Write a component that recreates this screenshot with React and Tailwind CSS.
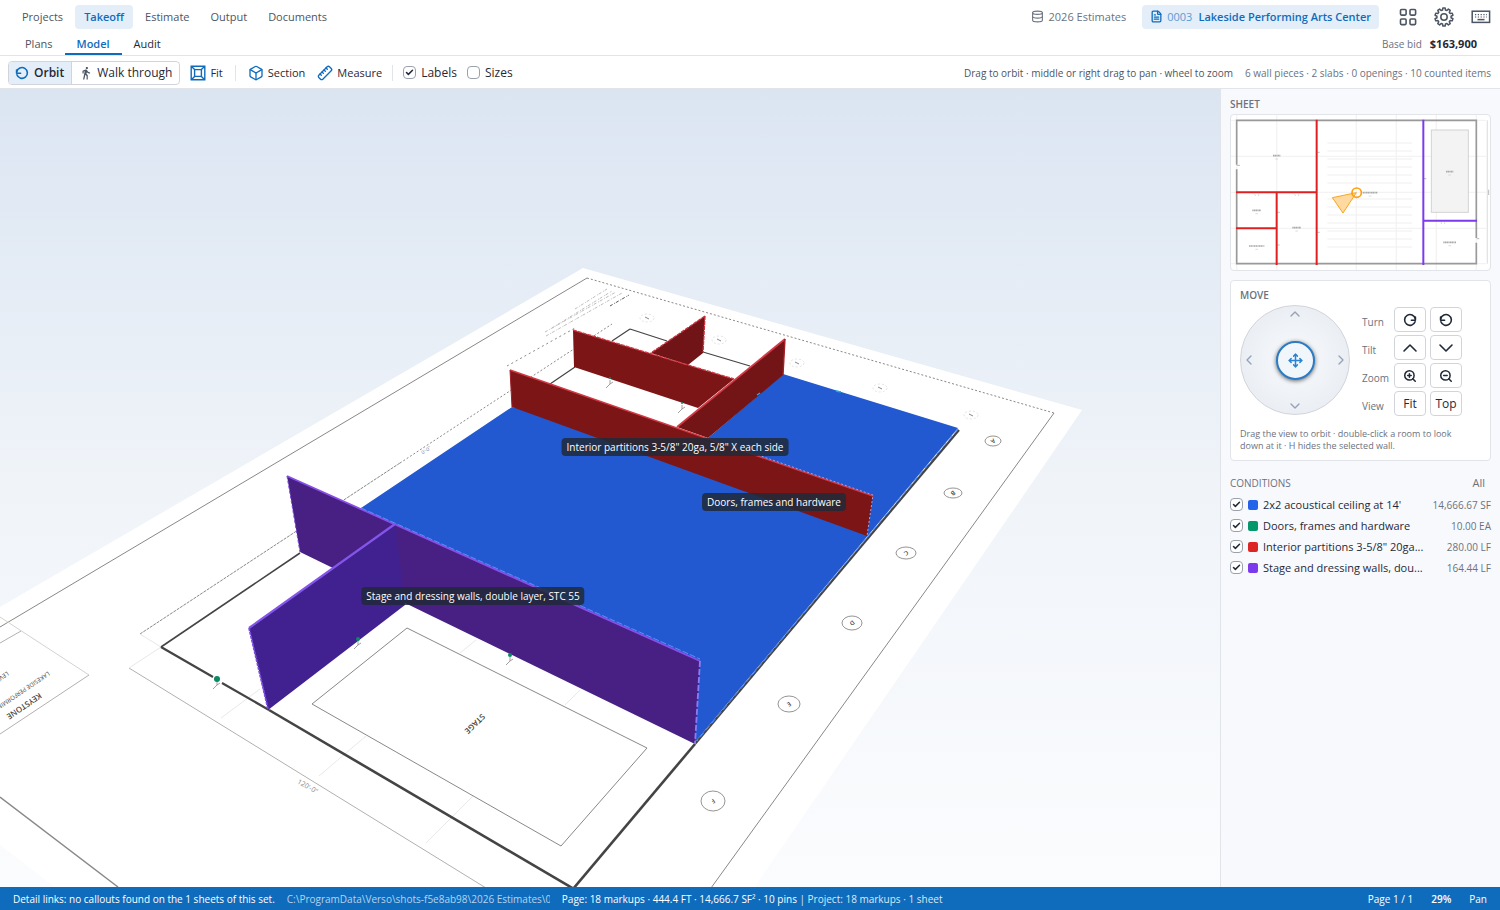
import React from 'react';
import { Box, Check, ChevronDown, ChevronLeft, ChevronRight, ChevronUp, Database, FileText, Move, Ruler, ZoomIn, ZoomOut } from 'lucide-react';
import { MdDirectionsWalk } from 'react-icons/md';

const CONDITIONS = [
  { name: "2x2 acoustical ceiling at 14'", qty: '14,666.67 SF', color: 'bg-[#2563eb]' },
  { name: 'Doors, frames and hardware', qty: '10.00 EA', color: 'bg-[#059669]' },
  { name: 'Interior partitions 3-5/8" 20ga...', qty: '280.00 LF', color: 'bg-[#dc2626]' },
  { name: 'Stage and dressing walls, dou...', qty: '164.44 LF', color: 'bg-[#7c3aed]' },
];

const BUBBLES = [
  { x: 713, y: 801, rx: 12, ry: 10, t: 'F' },
  { x: 789, y: 704, rx: 11, ry: 8, t: 'E' },
  { x: 852, y: 623, rx: 10, ry: 7, t: 'D' },
  { x: 906, y: 553, rx: 10, ry: 6, t: 'C' },
  { x: 953, y: 493, rx: 9, ry: 5, t: 'B' },
  { x: 993, y: 441, rx: 8, ry: 5, t: 'A' },
];

const FAINT_BUBBLES = [
  { x: 971, y: 415 },
  { x: 880, y: 388 },
  { x: 797, y: 363 },
  { x: 719, y: 340 },
  { x: 647, y: 318 },
];

const DOORS = [
  { x: 217, y: 679, r: 3 },
  { x: 358, y: 639, r: 2 },
  { x: 510, y: 655, r: 2 },
  { x: 610, y: 378, r: 1 },
  { x: 682, y: 403, r: 1 },
];

function gearPath() {
  const teeth = 10;
  let d = '';
  for (let i = 0; i < teeth; i++) {
    const step = (Math.PI * 2) / teeth;
    const a = i * step - Math.PI / 2;
    [[-0.33, 7.1], [-0.2, 9.1], [0.2, 9.1], [0.33, 7.1]].forEach(([o, r], k) => {
      const x = 10 + Math.cos(a + o * step) * r;
      const y = 10 + Math.sin(a + o * step) * r;
      d += `${i === 0 && k === 0 ? 'M' : 'L'}${x.toFixed(2)} ${y.toFixed(2)}`;
    });
  }
  return d + 'Z';
}

function RotateIcon({ flip = false, className }) {
  return (
    <svg viewBox="0 0 16 16" fill="none" stroke="currentColor" strokeWidth="1.6" strokeLinecap="round" strokeLinejoin="round" className={className} aria-hidden="true">
      <g transform={flip ? 'matrix(-1 0 0 1 16 0)' : undefined}>
        <path d="M13.4 5v3.2H9.4" />
        <path d="M13.1 9.8A5.4 5.4 0 1 1 13.3 6.8" />
      </g>
    </svg>
  );
}

function FitIcon() {
  return (
    <svg viewBox="0 0 16 16" fill="none" stroke="currentColor" strokeWidth="1.4" className="size-4" aria-hidden="true">
      <path d="M1.2 1.2h13.6v13.6H1.2zM4.6 4.6h6.8v6.8H4.6zM1 1l3.6 3.6M15 1l-3.6 3.6M1 15l3.6-3.6M15 15l-3.6-3.6" />
    </svg>
  );
}

function Tick({ label, defaultChecked }) {
  return (
    <span className="relative grid size-[13px] shrink-0 place-items-center">
      <input type="checkbox" aria-label={label} defaultChecked={defaultChecked} className="peer col-start-1 row-start-1 size-[13px] appearance-none rounded-sm border border-[#9aa1ab] bg-white" />
      <Check className="pointer-events-none invisible col-start-1 row-start-1 size-[9px] text-[#1f2937] peer-checked:visible" strokeWidth={4} />
    </span>
  );
}

function TopBar() {
  const tabs = ['Projects', 'Takeoff', 'Estimate', 'Output', 'Documents'];
  return (
    <div className="flex h-8 items-center pt-px pr-[9px] pl-[13px]">
      <nav className="flex gap-[3px]" aria-label="Main">
        {tabs.map((t) => (
          <button key={t} type="button" className={t === 'Takeoff' ? 'h-6 rounded bg-[#e3eef8] px-[9px] font-semibold text-[#0f6cbd]' : 'h-6 rounded px-[9px] text-[#4b5563]'}>
            {t}
          </button>
        ))}
      </nav>
      <div className="ml-auto flex items-center text-[#6b7280]">
        <button type="button" className="flex items-center gap-[5px]">
          <Database className="size-[13px]" />
          2026 Estimates
        </button>
        <button type="button" className="ml-4 flex h-6 items-center rounded bg-[#e3eef8] px-2 text-[#0f6cbd]">
          <FileText className="size-[13px]" strokeWidth={2.4} />
          <span className="ml-1 text-[#5b9bd5]">0003</span>
          <span className="ml-1.5 font-semibold">Lakeside Performing Arts Center</span>
        </button>
        <button type="button" aria-label="Apps" className="ml-5 text-[#4b5563]">
          <svg viewBox="0 0 18 18" fill="none" stroke="currentColor" strokeWidth="1.6" className="size-[18px]">
            <rect x="1.5" y="1.5" width="5.6" height="5.6" rx="1" />
            <rect x="11" y="1.5" width="5.6" height="5.6" rx="1" />
            <rect x="1.5" y="11" width="5.6" height="5.6" rx="1" />
            <rect x="11" y="11" width="5.6" height="5.6" rx="1" />
          </svg>
        </button>
        <button type="button" aria-label="Settings" className="ml-[17px] text-[#4b5563]">
          <svg viewBox="0 0 20 20" fill="none" stroke="currentColor" strokeWidth="1.5" strokeLinejoin="round" className="size-5">
            <path d={gearPath()} />
            <circle cx="10" cy="10" r="3.2" />
          </svg>
        </button>
        <button type="button" aria-label="Keyboard shortcuts" className="ml-[17px] text-[#4b5563]">
          <svg viewBox="0 0 20 14" fill="none" stroke="currentColor" strokeWidth="1.5" className="h-3.5 w-5">
            <rect x="1.2" y="1.2" width="17.4" height="11.2" />
            <path d="M4 4.6h12M4 7h12" strokeDasharray="1.2 1.6" strokeWidth="1.2" />
            <path d="M6.5 9.6h7" />
          </svg>
        </button>
      </div>
    </div>
  );
}

function SubBar() {
  return (
    <div className="flex h-6 items-stretch border-b border-[#e1e4e9] pr-[23px] pl-[13px]">
      <nav className="flex" aria-label="Takeoff views">
        <button type="button" className="px-3 text-[#4b5563]">Plans</button>
        <button type="button" className="border-b-2 border-[#0f6cbd] px-3 pt-0.5 font-semibold text-[#0f6cbd]">Model</button>
        <button type="button" className="px-3 text-[#1f2937]">Audit</button>
      </nav>
      <div className="ml-auto flex items-center gap-2">
        <span className="text-[10px] text-[#6b7280]">Base bid</span>
        <span className="font-bold text-[#1f2937]">$163,900</span>
      </div>
    </div>
  );
}

function Toolbar() {
  return (
    <div className="flex h-[33px] items-center border-b border-[#e1e4e9] pt-px pr-[9px] pl-2 text-[12px] text-[#1f2937]">
      <div className="flex h-6 overflow-hidden rounded-sm border border-[#d1d5db]">
        <button type="button" className="flex items-center gap-1 border-r border-[#d1d5db] bg-[#e3eef8] pr-[7px] pl-[5px] font-semibold">
          <RotateIcon flip className="size-4 text-[#0f6cbd]" />
          Orbit
        </button>
        <button type="button" className="flex items-center gap-1 px-[7px]">
          <MdDirectionsWalk className="size-3.5 text-[#4b5563]" />
          Walk through
        </button>
      </div>
      <div className="ml-2.5 flex items-center text-[11px]">
        <button type="button" className="flex items-center gap-1">
          <span className="text-[#0f6cbd]"><FitIcon /></span>
          Fit
        </button>
        <span className="mx-3 h-4 w-px bg-[#e1e4e9]" />
        <button type="button" className="flex items-center gap-1">
          <Box className="size-4 text-[#0f6cbd]" />
          Section
        </button>
        <button type="button" className="ml-3 flex items-center gap-1">
          <Ruler className="size-4 -scale-x-100 text-[#0f6cbd]" />
          Measure
        </button>
        <span className="mx-2.5 h-4 w-px bg-[#e1e4e9]" />
      </div>
      <label className="flex items-center gap-[5px]"><Tick defaultChecked />Labels</label>
      <label className="ml-2.5 flex items-center gap-[5px]"><Tick />Sizes</label>
      <div className="ml-auto flex gap-3 text-[10px]">
        <span className="text-[#4b5563]">Drag to orbit · middle or right drag to pan · wheel to zoom</span>
        <span className="text-[#6b7280]">6 wall pieces · 2 slabs · 0 openings · 10 counted items</span>
      </div>
    </div>
  );
}

function Scene() {
  return (
    <svg viewBox="0 89 1220 798" preserveAspectRatio="xMidYMid slice" className="absolute inset-0 size-full" role="img" aria-label="3D model view" fontFamily="'Open Sans', sans-serif">
      <defs>
        <linearGradient id="sky" x1="0" y1="0" x2="0" y2="1">
          <stop offset="0" stopColor="#dbe5f2" />
          <stop offset="0.5" stopColor="#f0f4f9" />
          <stop offset="1" stopColor="#fbfcfe" />
        </linearGradient>
      </defs>
      <rect x="0" y="89" width="1220" height="798" fill="url(#sky)" />
      <polygon points="583,268 1082,410 754,888 56,888 0,845 0,607" fill="#fff" />

      <g fill="none" stroke="#8a8886" strokeWidth="1">
        <path d="M587 278L0 627M1054 413L711 888" />
        <path d="M587 278L1054 413" strokeDasharray="2 2" />
        <path d="M0 797L118 887" strokeWidth="1.4" />
        <path d="M140 634L400 463" strokeDasharray="3 1" />
        <path d="M400 463L612 324" strokeDasharray="2 2" />
        <path d="M507 366L575 328" strokeDasharray="2 3" />
        <path d="M129 668L486 888" stroke="#b3b0ad" />
        <path d="M0 617L89 675" stroke="#d6d2cd" />
        <path d="M89 675L0 734M0 643L21 631" stroke="#b3b0ad" />
        <path d="M407 628L647 748L561 846L312 704Z" />
      </g>
      <g stroke="#e8e8e8" strokeWidth="1">
        <path d="M140 634L161 647M129 668L161 647M221 718L260 689M319 776L366 736M426 843L473 796M460 653L476 640M565 705L580 690" />
      </g>
      <g stroke="#a3a3a3" strokeWidth="1" strokeDasharray="3 2 1 1">
        <path d="M575 309L607 289M552 328L612 291M545 332L616 292M546 336L622 293" opacity="0.7" />
        <path d="M610 306L629 295" stroke="#555" />
      </g>

      <g stroke="#444" fill="none">
        <path d="M630 329L667 341M703 352L750 366M630 329L612 341M575 367L550 384" strokeWidth="1.2" />
        <path d="M300 553L161 647" strokeWidth="1.6" />
        <path d="M161 647L213 677M222 683L269 710" strokeWidth="2.2" />
        <path d="M269 710L574 889" strokeWidth="2.6" />
        <path d="M959 430L695 744" strokeWidth="2.2" />
        <path d="M695 744L573 889" strokeWidth="2.6" />
      </g>

      <polygon points="512,407 600,425 708,438 783,374 958,428 696,741 380,560 361,508" fill="#2259d1" />
      <path d="M958 429L697 741" stroke="#4a86f0" strokeWidth="1" strokeDasharray="6 3" />

      <polygon points="705,316 703,353 688,365 651,353" fill="#701417" />
      <path d="M705 316L651 353M705 316L703 352" stroke="#c8303c" strokeWidth="1.4" strokeDasharray="4 1" />
      <polygon points="573,330 734,379 698,408 574,367" fill="#7c1616" />
      <path d="M573 330L734 379" stroke="#d33a46" strokeWidth="1.4" strokeDasharray="4 1" />
      <polygon points="785,339 783,375 708,438 677,427" fill="#731517" />
      <path d="M785 339L677 427" stroke="#d33a46" strokeWidth="1.8" />
      <path d="M785 339L783 375" stroke="#a02028" strokeWidth="1.4" />
      <polygon points="510,370 873,496 867,536 512,407" fill="#7c1616" />
      <path d="M510 370L873 496" stroke="#d33a46" strokeWidth="1.4" />
      <path d="M758 455L873 495L867 536" fill="none" stroke="#a9a0dd" strokeWidth="1" strokeDasharray="2 2" />
      <path d="M510 370L512 407" stroke="#a02028" strokeWidth="1" />

      <polygon points="287,476 700,661 695,744 300,552" fill="#482083" />
      <path d="M287 476L700 661" stroke="#8a4ee8" strokeWidth="1.8" />
      <path d="M361 508L700 659" stroke="#5f8ef5" strokeWidth="1" strokeDasharray="6 2" />
      <path d="M287 476L300 552" stroke="#7a45d8" strokeWidth="1" strokeDasharray="3 2" />
      <path d="M700 661L695 744" stroke="#8b7cf5" strokeWidth="1.8" strokeDasharray="6 2" />
      <polygon points="395,524 249,628 268,710 405,605" fill="#41208f" />
      <path d="M395 524L249 628" stroke="#8455ea" strokeWidth="2.2" />
      <path d="M249 628L268 709" stroke="#7a4be0" strokeWidth="1.8" strokeDasharray="3 1" />

      {DOORS.map((d) => (
        <g key={d.x}>
          <path d={`M${d.x} ${d.y + 2}l0 4l-4 4M${d.x} ${d.y + 6}l3 -2`} fill="none" stroke="#8a8886" strokeWidth="0.8" />
          <circle cx={d.x} cy={d.y} r={d.r} fill="#0a8a62" />
        </g>
      ))}
      <path d="M757 395l3 -2M836 391l5 1" stroke="#1bb0d8" strokeWidth="1.4" />

      {BUBBLES.map((b) => (
        <g key={b.t}>
          <ellipse cx={b.x} cy={b.y} rx={b.rx} ry={b.ry} fill="#fff" stroke="#8a8886" strokeWidth="0.9" />
          <text fontSize="6" fontWeight="600" fill="#444" textAnchor="middle" transform={`translate(${b.x} ${b.y}) rotate(140)`} dy="2">{b.t}</text>
        </g>
      ))}
      {FAINT_BUBBLES.map((b) => (
        <g key={b.x}>
          <ellipse cx={b.x} cy={b.y} rx="7" ry="4" fill="none" stroke="#dcdcdc" strokeWidth="0.8" strokeDasharray="2 2" />
          <path d={`M${b.x - 2} ${b.y - 1}l4 2`} stroke="#888" strokeWidth="1" />
        </g>
      ))}

      <g fill="#444" textAnchor="middle">
        <text fontSize="8" fontWeight="600" transform="translate(475 724) rotate(136)" dy="3">STAGE</text>
        <text fontSize="7" fill="#8a8886" transform="translate(308 786) rotate(30)" dy="3">120'-0"</text>
        <text fontSize="5" fill="#8a8886" transform="translate(426 450) rotate(-34)" dy="2">0'-0"</text>
      </g>
      <g fill="#444">
        <text fontSize="8" fontWeight="600" transform="translate(41 695) rotate(146)" dy="3">KEYSTONE</text>
        <text fontSize="6" transform="translate(49 673) rotate(146)" dy="2">LAKESIDE PERFORMING</text>
        <text fontSize="6" transform="translate(8 673) rotate(146)" dy="2">LEVEL</text>
      </g>
    </svg>
  );
}

function Callout({ className, children }) {
  return (
    <div className={`absolute -translate-x-1/2 -translate-y-1/2 rounded bg-[#202938]/85 px-[5px] text-[10px] leading-[18px] whitespace-nowrap text-white ${className}`}>
      {children}
    </div>
  );
}

function SheetMap() {
  const seats = [165, 189, 213, 237, 261, 285, 333, 357, 381, 405, 429, 453, 477];
  const rooms = [
    [170, 203, 22], [110, 367, 26], [230, 419, 26], [110, 474, 46], [450, 314, 44], [689, 251, 22], [689, 463, 38],
  ];
  return (
    <svg viewBox="33 81 777 465" className="block w-full rounded-sm border border-[#e1e4e9] bg-white" role="img" aria-label="Sheet overview">
      <g stroke="#f3f3f3" strokeWidth="4">
        <path d="M50 81V546M170 81V546M409 81V546M529 81V546M649 81V546M769 81V546M33 97H798M33 205H798M33 313H798M33 421H798M33 527H798" />
      </g>
      <g stroke="#efefef" strokeWidth="3">
        {seats.map((y) => <path key={y} d={`M322 ${y}H577`} />)}
        <path d="M802 97V527" stroke="#e4e4e4" strokeWidth="4" />
      </g>
      <rect x="634" y="126" width="111" height="247" fill="#f3f3f3" stroke="#d2d2d2" strokeWidth="3" />
      <path d="M50 230V97H769V450M769 464V527H50V244" fill="none" stroke="#999" strokeWidth="5" />
      <g stroke="#bbb" strokeWidth="3">
        <path d="M50 232h10M292 193h7M292 433h7M172 373h7M172 471h7M612 272h7M770 452h8M806 305v16" />
        <path d="M103 318l4 6M117 318l-2 6M223 318l4 6M237 318l-2 6M664 402v6M674 402v6" stroke="#ddd" />
      </g>
      {rooms.map(([x, y, w]) => (
        <g key={`${x}-${y}`}>
          <path d={`M${x - w / 2} ${y}h${w}`} stroke="#aaa" strokeWidth="5" strokeDasharray="4 1" />
          <path d={`M${x - 4} ${y + 10}h8`} stroke="#ccc" strokeWidth="2" />
        </g>
      ))}
      <path d="M290 95V531M48 313H292M170 313V531M48 421H170" stroke="#e02020" strokeWidth="6" />
      <path d="M610 95V531M610 398H771" stroke="#7c3aed" strokeWidth="6" />
      <path d="M409 314L337 329L369 375Z" fill="#ffd9a0" stroke="#f5a623" strokeWidth="3" />
      <circle cx="410" cy="314" r="14" fill="none" stroke="#ff9f0a" strokeWidth="5" />
    </svg>
  );
}

function PadButton({ label, children }) {
  return (
    <button type="button" aria-label={label} className="grid h-[25px] w-8 place-items-center rounded-sm border border-[#d1d5db] bg-white text-[12px] text-[#1f2937]">
      {children}
    </button>
  );
}

function MoveCard() {
  return (
    <section className="mt-[9px] rounded border border-[#e1e4e9] bg-white px-[9px] pt-[9px] pb-2">
      <h2 className="text-[10px] leading-[10px] font-semibold text-[#6b7280]">MOVE</h2>
      <div className="mt-[5px] flex gap-3">
        <div className="grid size-[110px] shrink-0 grid-cols-3 grid-rows-3 place-items-center rounded-full border border-[#d1d5db] bg-[radial-gradient(circle,#f8fafc_0%,#e5e9f0_100%)] text-[#94a3b8]">
          <ChevronUp className="col-start-2 size-4 self-start" />
          <ChevronLeft className="col-start-1 row-start-2 size-4 justify-self-start" />
          <button type="button" aria-label="Pan" className="col-start-2 row-start-2 grid size-[39px] place-items-center rounded-full border-2 border-[#2b7cc7] bg-[#f1f6fb] text-[#2b83d4] shadow-[0_1px_4px_rgba(0,0,0,0.6)]">
            <Move className="size-[15px]" strokeWidth={2.4} />
          </button>
          <ChevronRight className="col-start-3 row-start-2 size-4 justify-self-end" />
          <ChevronDown className="col-start-2 row-start-3 size-4 self-end" />
        </div>
        <div className="grid auto-rows-[25px] grid-cols-[28px_32px_32px] items-center gap-x-1 gap-y-[3px] pt-0.5 text-[10px] text-[#6b7280]">
          <span className="pt-1">Turn</span>
          <PadButton label="Turn right"><RotateIcon className="size-4" /></PadButton>
          <PadButton label="Turn left"><RotateIcon flip className="size-4" /></PadButton>
          <span className="pt-1">Tilt</span>
          <PadButton label="Tilt up"><ChevronUp className="size-6" strokeWidth={1.6} /></PadButton>
          <PadButton label="Tilt down"><ChevronDown className="size-6" strokeWidth={1.6} /></PadButton>
          <span className="pt-1">Zoom</span>
          <PadButton label="Zoom in"><ZoomIn className="size-3.5" strokeWidth={2.6} /></PadButton>
          <PadButton label="Zoom out"><ZoomOut className="size-3.5" strokeWidth={2.6} /></PadButton>
          <span className="pt-1">View</span>
          <PadButton>Fit</PadButton>
          <PadButton>Top</PadButton>
        </div>
      </div>
      <p className="mt-3 pr-6 text-[9px] leading-3 text-[#6b7280]">Drag the view to orbit · double-click a room to look down at it · H hides the selected wall.</p>
    </section>
  );
}

function Sidebar() {
  return (
    <aside className="w-[280px] shrink-0 border-l border-[#e1e4e9] bg-[#f8f9fd] px-[9px] pt-2.5">
      <h2 className="mb-[5px] text-[10px] leading-[10px] font-semibold text-[#6b7280]">SHEET</h2>
      <SheetMap />
      <MoveCard />
      <div className="mt-3.5 flex h-4 items-center justify-between pr-1.5">
        <h2 className="text-[10px] text-[#6b7280]">CONDITIONS</h2>
        <button type="button" className="text-[#6b7280]">All</button>
      </div>
      <ul className="mt-[3px]">
        {CONDITIONS.map((c) => (
          <li key={c.name}>
            <label className="flex h-[21px] items-center">
              <Tick label={c.name} defaultChecked />
              <span className={`ml-[5px] size-2.5 shrink-0 rounded-[2px] ${c.color}`} />
              <span className="ml-[5px] text-[11px] whitespace-nowrap text-[#1f2937]">{c.name}</span>
              <span className="ml-auto text-[10px] text-[#6b7280]">{c.qty}</span>
            </label>
          </li>
        ))}
      </ul>
    </aside>
  );
}

function StatusBar() {
  return (
    <footer className="flex h-[23px] items-center bg-[#0f6cbd] pt-px pr-[13px] pl-[13px] text-[10px] whitespace-nowrap text-white">
      <span>Detail links: no callouts found on the 1 sheets of this set.</span>
      <span className="ml-3 w-[263px] overflow-hidden text-[#b7d3ec]">{'C:\\ProgramData\\Verso\\shots-f5e8ab98\\2026 Estimates\\00'}</span>
      <span className="ml-3">Page: 18 markups · 444.4 FT · 14,666.7 SF² · 10 pins</span>
      <span className="text-[#dbe9f6]">&nbsp;| Project: 18 markups · 1 sheet</span>
      <span className="ml-auto">Page 1 / 1</span>
      <span className="ml-[18px] font-semibold">29%</span>
      <span className="ml-[18px]">Pan</span>
    </footer>
  );
}

export default function App() {
  return (
    <div className="flex h-screen flex-col bg-white font-['Open_Sans',sans-serif] text-[11px] leading-4">
      <header>
        <TopBar />
        <SubBar />
        <Toolbar />
      </header>
      <div className="flex min-h-0 flex-1">
        <main className="relative flex-1 overflow-hidden">
          <Scene />
          <Callout className="top-[358px] left-[675px]">Interior partitions 3-5/8" 20ga, 5/8" X each side</Callout>
          <Callout className="top-[413px] left-[774px]">Doors, frames and hardware</Callout>
          <Callout className="top-[507px] left-[473px]">Stage and dressing walls, double layer, STC 55</Callout>
        </main>
        <Sidebar />
      </div>
      <StatusBar />
    </div>
  );
}
